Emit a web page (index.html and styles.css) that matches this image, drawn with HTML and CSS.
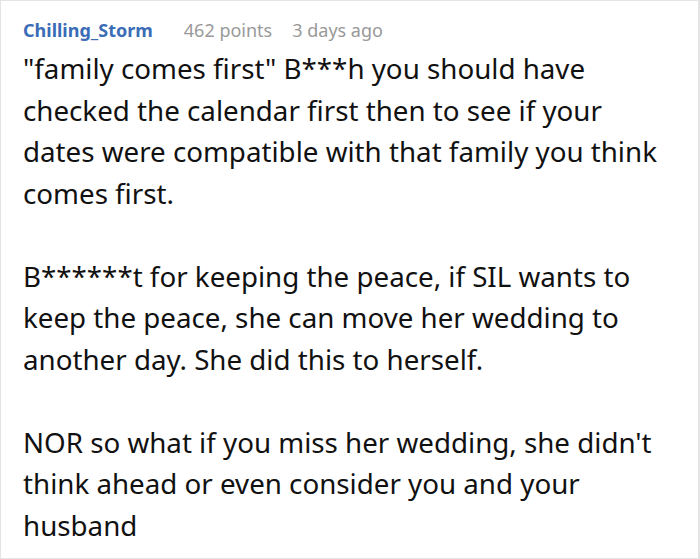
FILE: index.html
```html
<!DOCTYPE html>
<html>
<head>
<meta charset="utf-8">
<link rel="stylesheet" href="styles.css">
</head>
<body>
<div class="comment">
  <div class="meta">
    <span class="user">Chilling_Storm</span>
    <span class="info">462 points</span>
    <span class="info">3 days ago</span>
  </div>
  <div class="body">
    <p>"family comes first" B***h you should have checked the calendar first then to see if your dates were compatible with that family you think comes first.</p>
    <p>B******t for keeping the peace, if SIL wants to keep the peace, she can move her wedding to another day. She did this to herself.</p>
    <p>NOR so what if you miss her wedding, she didn't think ahead or even consider you and your husband</p>
  </div>
</div>
</body>
</html>
```
FILE: styles.css
```css
html, body {
  margin: 0;
  padding: 0;
  background: #fff;
}
.comment {
  box-sizing: border-box;
  width: 700px;
  height: 559px;
  border: 1px solid #e4e4e4;
  border-right-width: 2px;
  padding: 16px 30px 0 22px;
  font-family: "Noto Sans", "Open Sans", sans-serif;
  color: #111;
  overflow: hidden;
}
.meta {
  display: flex;
  align-items: baseline;
  gap: 20px;
  font-size: 18px;
  line-height: 27px;
}
.user {
  color: #3b6cb6;
  font-weight: 700;
  margin-right: 11px;
}
.info {
  color: #999;
}
.body {
  margin-top: 4px;
  font-size: 27.72px;
  line-height: 41.5px;
}
.body p {
  margin: 0 0 41.5px 0;
}
```
